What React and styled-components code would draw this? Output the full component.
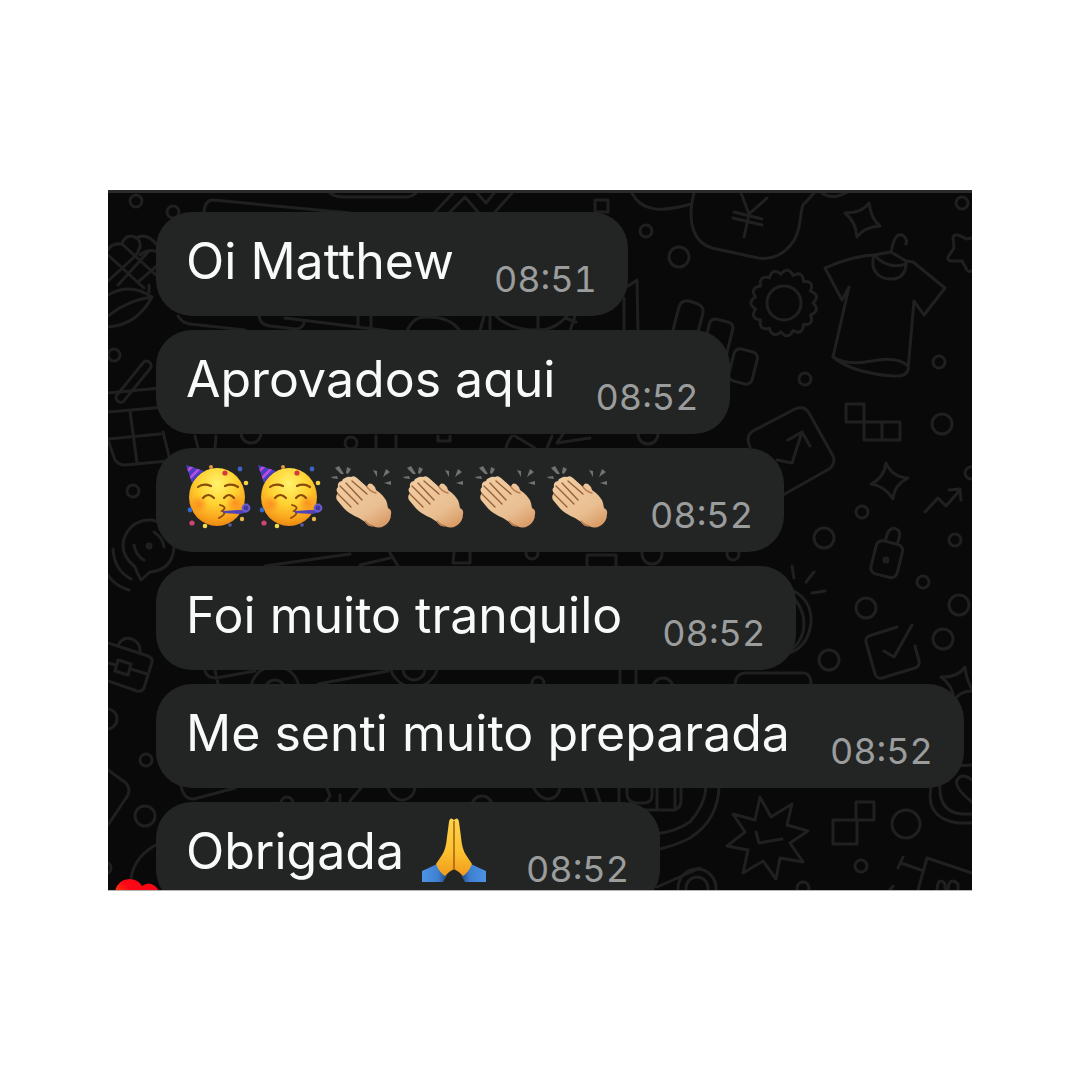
import React from 'react'
import styled, { createGlobalStyle } from 'styled-components'

const GlobalStyle = createGlobalStyle`
  * {
    box-sizing: border-box;
  }

  body {
    margin: 0;
    background: #ffffff;
    font-family: Inter, "Liberation Sans", sans-serif;
  }
`

const Page = styled.main`
  min-height: 100vh;
  display: flex;
  align-items: center;
  justify-content: center;
`

const Chat = styled.section`
  position: relative;
  display: grid;
  grid-template: 100% / 100%;
  width: 80%;
  aspect-ratio: 216 / 175;
  overflow: hidden;
  background: #090909;
  border-top: 3px solid #2a2c2c;
  box-shadow: 0 1px 0 #b4b4b4;
`

const Wallpaper = styled.svg`
  grid-area: 1 / 1;
  width: 100%;
  height: 100%;
  fill: none;
  stroke: #202020;
  stroke-width: 3;
  stroke-linecap: round;
  stroke-linejoin: round;
`

const Messages = styled.ul`
  grid-area: 1 / 1;
  z-index: 1;
  display: flex;
  flex-direction: column;
  align-items: flex-start;
  gap: 14px;
  margin: 0;
  padding: 19px 12px 0 48px;
  list-style: none;
`

const Bubble = styled.li`
  display: flex;
  flex-shrink: 0;
  align-items: flex-end;
  gap: 40px;
  min-height: 104px;
  padding: 17px 31px 15px 30px;
  border-radius: 36px;
  background: #232525;
`

const Body = styled.div`
  display: flex;
  align-self: flex-start;
  gap: ${(props) => (props.$emojiOnly ? '8px' : '18px')};
  color: #f8f9f9;
  font-size: 50px;
  line-height: 64px;
  white-space: nowrap;
`

const Time = styled.time`
  color: #9b9d9d;
  font-size: 36px;
  line-height: 44px;
  font-variant-numeric: tabular-nums;
`

const Emoji = styled.svg`
  flex-shrink: 0;
  width: 64px;
  height: 64px;
  overflow: visible;
`

const Heart = styled.svg`
  position: absolute;
  z-index: 2;
  left: 7px;
  bottom: -32px;
  width: 46px;
  height: 44px;
`

const smallDots = [
  [136, 201], [173, 212], [646, 231], [962, 203], [805, 379], [939, 362],
  [862, 512], [955, 540], [923, 582], [971, 473], [733, 554], [114, 355],
  [133, 491], [146, 760], [105, 868], [861, 866], [803, 888], [351, 443],
  [532, 553], [538, 683], [287, 803],
]

const bigDots = [
  [679, 257], [942, 424], [824, 538], [959, 605], [943, 639], [866, 608],
  [829, 660], [145, 816], [107, 719], [648, 434], [652, 554], [251, 433],
  [663, 688], [482, 806],
]

const badgeEdge = () => {
  const points = []
  for (let i = 0; i < 180; i++) {
    const a = (i / 180) * Math.PI * 2
    const r = 29 + 4 * Math.abs(Math.sin(a * 7.5))
    points.push(`${(784 + r * Math.cos(a)).toFixed(1)},${(303 + r * Math.sin(a)).toFixed(1)}`)
  }
  return points.join(' ')
}

const doodles = [
  // money bag
  'M632 193C641 211 660 213 691 204M694 193C686 225 695 243 712 248L758 258C778 261 795 247 799 227C802 211 801 204 806 202L814 193M822 193Q832 200 846 193',
  'M741 193L749 214L767 198M749 214L744 237M734 212L762 219M733 218L762 225',
  // sparkles
  'M869 203Q871 219 880 226Q864 227 857 237Q856 222 845 213Q862 213 869 203Z',
  'M886 463Q892 477 908 478Q894 485 893 499Q885 486 871 484Q884 478 886 463Z',
  'M941 677Q957 678 965 667Q967 684 974 691Q961 690 954 700Q953 685 941 677Z',
  'M972 238L966 239Q955 232 953 237L954 248L948 257Q947 261 952 261L962 261L967 270Q969 273 973 270',
  // shirt on a hanger
  'M891 252L893 244Q896 233 902 235Q908 238 906 244M891 252L906 261L913 262L945 288L924 315L914 301L908 370Q906 377 893 376Q852 373 833 357L849 287L842 300L825 268Q852 256 874 255L891 252',
  'M833 357Q848 366 872 361Q897 356 908 366M874 255Q888 270 906 264M874 255C869 272 881 280 893 279Q907 277 906 261',
  // blocks
  'M846 404H864V422H846ZM864 422H882V440H864ZM882 422H900V440H882ZM856 802H874V820H856ZM833 820H857V844H833ZM595 200H608V212H595Z',
  // chart card
  'M750 447Q745 436 753 431L795 409Q804 405 809 413L833 456Q836 464 829 469L783 495M777 460L792 463L802 432M788 440L802 432L810 446',
  'M925 512L938 498L946 506L960 490M949 490L960 489L961 500',
  // padlock shackle
  'M885 541L888 532Q893 525 899 531Q901 535 897 544',
  // alarm
  'M792 590Q812 600 811 622Q809 645 790 653M794 598Q807 614 803 632Q800 644 790 650M792 566L794 578M806 582L814 572M812 593L825 591',
  // check box
  'M897 627L869 636Q865 638 866 642L875 674Q877 679 882 678L915 668Q920 666 919 661L915 646M884 651L894 657L912 625',
  'M735 684Q736 674 744 673H804Q811 674 811 684',
  // roll
  'M932 783Q923 818 958 823H972M940 783Q938 812 962 814H972M957 766L972 765M972 780Q962 772 957 780Q954 788 972 802',
  // burst
  'M760 797L771 817L792 804L787 825L808 831L790 843L803 862L780 858L776 879L763 861L743 873L748 850L727 846L745 832L733 814L755 820ZM756 832L759 843L782 839',
  // bottom right bag
  'M903 857L898 868M901 863L921 870M918 890L927 858L972 873M937 890Q938 876 945 884V890M948 890Q949 876 958 884V890M890 890L893 886',
  // broad arcs
  'M719 787Q718 820 690 838Q675 846 655 850M706 787Q705 805 690 822Q675 832 655 834M657 887L700 868',
  'M619 787V802M627 787V795Q628 802 636 803H645Q652 802 652 795V787M657 787V808M640 810H673Q681 809 681 801V787M675 787V810M582 787L587 802M595 787L600 802',
  // top edge
  'M204 212Q205 200 213 200L350 213M330 193Q335 197 345 197H405Q412 197 416 193M435 212L453 193M450 212L465 197L478 212M477 193L486 203L494 193M495 212L512 193',
  // pine cone
  'M108 250Q111 243 122 244Q124 236 132 236Q141 238 140 247Q138 254 132 259M136 238Q147 232 157 245M140 255Q148 248 158 252M122 244L156 275M108 255L144 288M132 259L108 281M148 252L118 285M158 265L138 282M149 285V292',
  'M108 295Q130 282 152 297Q137 325 108 327M152 297Q130 299 108 316',
  // basket
  'M108 393L160 388M108 412L165 407M108 439L160 434M108 440L115 460Q119 465 125 465L168 461M130 411L137 463M163 432L170 460',
  // location bubble
  'M135 567Q118 553 125 536Q133 519 152 520Q175 525 174 548Q172 570 150 572L141 580Q137 573 135 567M134 545Q136 556 144 560M113 549Q114 570 131 579M108 575Q115 586 129 590M154 532Q163 538 164 547',
  // suitcase
  'M108 643L148 656Q153 658 152 662L144 688Q142 692 137 691L108 681M118 646Q122 636 132 639Q141 643 140 652M108 663L116 665M131 669L147 674M118 660L131 664L128 675L115 671Z',
  'M108 770L126 783Q132 790 126 798L108 825M131 878Q135 855 158 844',
  // strips between the rows
  'M178 316Q182 323 190 324L245 330M259 316Q260 325 270 326L296 329Q303 328 304 323M285 318L390 331M358 316V326M371 316V328',
  'M407 331Q413 317 425 317Q450 316 460 331M480 331L484 316M490 331V316M496 316Q510 330 538 330Q555 330 567 316M538 316V331M570 331L575 316M565 318L576 322',
  'M624 298V332M628 286L637 280L638 332M673 330L679 307Q681 300 689 301L698 304Q704 307 703 313L698 332',
  'M195 436L198 448M216 436L215 448M376 436V448M396 436V448M438 436V441H450V436M506 448Q508 440 512 436M515 436L535 448M547 448L552 436M563 434L557 443L590 438',
  'M265 566L350 554M454 552L453 563H470V552M360 565L390 558M390 553L398 566M587 566V555H616V566',
  'M205 671Q207 678 216 678L255 671M215 670L218 684M318 684L388 671M620 670V684M636 670V684',
  'M181 786Q184 800 194 799L235 788M327 788L330 796L326 802M340 795V802M350 801L361 788M388 788Q390 796 400 800M402 800Q414 799 415 787M533 787Q540 800 550 799Q559 797 560 787',
]

function Doodles() {
  return (
    <Wallpaper viewBox="108 193 864 697" preserveAspectRatio="xMidYMid slice" aria-hidden="true">
      {smallDots.map(([x, y]) => <circle key={`${x}-${y}`} cx={x} cy={y} r="6" />)}
      {bigDots.map(([x, y]) => <circle key={`${x}-${y}`} cx={x} cy={y} r="10" />)}
      {doodles.map((d) => <path key={d} d={d} />)}
      <polygon points={badgeEdge()} />
      <circle cx="784" cy="303" r="17" />
      <circle cx="906" cy="824" r="14" />
      <circle cx="697" cy="888" r="19" />
      <circle cx="697" cy="888" r="11" />
      <circle cx="275" cy="690" r="24" />
      <circle cx="275" cy="690" r="10" />
      <circle cx="414" cy="663" r="24" />
      <circle cx="414" cy="669" r="11" />
      <circle cx="149" cy="546" r="2" />
      <circle cx="886" cy="560" r="2" />
      <rect x="873" y="542" width="27" height="34" rx="6" transform="rotate(14 886 560)" />
      <rect x="731" y="350" width="24" height="33" rx="6" transform="rotate(14 743 367)" />
      <rect x="705" y="320" width="24" height="48" rx="6" transform="rotate(14 717 343)" />
      <rect x="129" y="357" width="9" height="50" rx="4" transform="rotate(39 134 382)" />
    </Wallpaper>
  )
}

function PartyFace() {
  return (
    <Emoji viewBox="0 0 64 64" role="img" aria-label="🥳">
      <defs>
        <radialGradient id="face" cx="50%" cy="28%" r="72%">
          <stop offset="0" stopColor="#fff36b" />
          <stop offset="0.5" stopColor="#ffd02f" />
          <stop offset="0.85" stopColor="#f9a01b" />
          <stop offset="1" stopColor="#e98a12" />
        </radialGradient>
        <radialGradient id="cheek">
          <stop offset="0" stopColor="#fb7a1e" stopOpacity="0.65" />
          <stop offset="1" stopColor="#fb7a1e" stopOpacity="0" />
        </radialGradient>
        <clipPath id="hat">
          <path d="M0 0L18 6Q12 10 6 18Z" />
        </clipPath>
      </defs>
      <ellipse cx="31" cy="32" rx="28" ry="29" fill="url(#face)" />
      <circle cx="13" cy="39" r="9" fill="url(#cheek)" />
      <circle cx="49" cy="38" r="9" fill="url(#cheek)" />
      <g clipPath="url(#hat)">
        <path d="M0 0H20V20H0Z" fill="#4a3fc0" />
        <path d="M0 7L8 0M3 14L15 2M6 20L20 6" stroke="#b94be0" strokeWidth="2.6" />
      </g>
      <g fill="none" stroke="#8a4a08" strokeWidth="2.2" strokeLinecap="round">
        <path d="M12 22Q17 18 25 21M39 21Q46 18 52 22" />
        <path d="M17 33Q22 27 28 33M38 33Q43 27 48 33" />
        <path d="M34 40Q42 42 36 46Q42 48 33 53" strokeWidth="1.8" />
      </g>
      <path d="M37 46L52 45L60 45L62 47L54 49L37 48Z" fill="#5144b8" />
      <circle cx="60" cy="43" r="3.4" fill="#4238a0" stroke="#6a5ccc" strokeWidth="2" />
      <circle cx="25" cy="2" r="2" fill="#e29a42" />
      <circle cx="39" cy="8" r="2.6" fill="#d9373f" />
      <circle cx="54" cy="4" r="2.4" fill="#3f62c6" />
      <circle cx="60" cy="18" r="2.3" fill="#f4d24c" />
      <circle cx="4" cy="45" r="2.4" fill="#3567d0" />
      <circle cx="6" cy="58" r="2.6" fill="#cf4472" />
      <circle cx="19" cy="61" r="2.3" fill="#f2dc4a" />
      <circle cx="56" cy="54" r="2.2" fill="#e9b54a" />
      <circle cx="44" cy="60" r="1.8" fill="#5a5ba8" />
    </Emoji>
  )
}

function Clap() {
  return (
    <Emoji viewBox="0 0 64 64" role="img" aria-label="👏🏼">
      <defs>
        <linearGradient id="skin" x1="0.2" y1="0.1" x2="0.8" y2="1">
          <stop offset="0" stopColor="#f0cba0" />
          <stop offset="0.65" stopColor="#e9bf92" />
          <stop offset="1" stopColor="#d99b66" />
        </linearGradient>
      </defs>
      <path
        d="M15 13Q18 11 21 12Q24 10 27 13L37 22Q38 17 42 19Q45 21 46 25Q55 31 57 38L58 43Q62 45 61 49Q61 57 54 61Q49 64 43 61Q38 62 35 57L29 53Q17 48 12 41L7 35Q5 31 8 28Q5 25 8 22Q7 17 12 16Q12 14 15 13Z"
        fill="url(#skin)"
      />
      <g fill="none" stroke="#9a6038" strokeWidth="1.4" strokeLinecap="round">
        <path d="M22 16L37 29M16 18L32 35M10 21L28 39M8 29L21 42" />
        <path d="M37 22Q41 27 46 28" stroke="#b97d4d" />
        <path d="M35 56Q38 60 43 61" stroke="#b97d4d" />
      </g>
      <path
        fill="#717373"
        d="M5 3L9 1L14 9L11 9ZM17 2L21 4L18 9L16 8ZM1 12L7 11L8 14L2 13ZM43 5L47 6L47 12ZM56 4L60 7L53 12ZM54 18L61 16V20Z"
      />
    </Emoji>
  )
}

function FoldedHands() {
  return (
    <Emoji viewBox="0 0 64 64" role="img" aria-label="🙏">
      <defs>
        <linearGradient id="palm" x1="0" y1="0" x2="0" y2="1">
          <stop offset="0" stopColor="#ffd34d" />
          <stop offset="0.6" stopColor="#fcc02f" />
          <stop offset="1" stopColor="#ef9a1c" />
        </linearGradient>
        <linearGradient id="sleeve" x1="0" y1="0" x2="1" y2="0">
          <stop offset="0" stopColor="#4d93e4" />
          <stop offset="0.65" stopColor="#3f7fd0" />
          <stop offset="1" stopColor="#1f477d" />
        </linearGradient>
      </defs>
      <g id="half">
        <path d="M0 52Q7 49 15 45Q18 52 25 56L21 63H0Z" fill="url(#sleeve)" />
        <path d="M32 1Q28 -3 27 3L25 18Q24 30 20 36L14 45Q17 53 23 57Q26 53 32 50Z" fill="url(#palm)" />
      </g>
      <use href="#half" transform="matrix(-1 0 0 1 64 0)" />
      <path d="M32 2V51" stroke="#a4600f" strokeWidth="1.5" />
    </Emoji>
  )
}

const messages = [
  { text: 'Oi Matthew', time: '08:51' },
  { text: 'Aprovados aqui', time: '08:52' },
  { emojis: [PartyFace, PartyFace, Clap, Clap, Clap, Clap], time: '08:52' },
  { text: 'Foi muito tranquilo', time: '08:52' },
  { text: 'Me senti muito preparada', time: '08:52' },
  { text: 'Obrigada', emojis: [FoldedHands], time: '08:52' },
]

function App() {
  return (
    <>
      <GlobalStyle />
      <Page>
        <Chat>
          <Doodles />
          <Messages>
            {messages.map((message, index) => (
              <Bubble key={index}>
                <Body $emojiOnly={!message.text}>
                  {message.text && <span>{message.text}</span>}
                  {message.emojis && message.emojis.map((Icon, i) => <Icon key={i} />)}
                </Body>
                <Time>{message.time}</Time>
              </Bubble>
            ))}
          </Messages>
          <Heart viewBox="0 0 46 44" aria-hidden="true">
            <defs>
              <linearGradient id="heart" x1="0" y1="0.5" x2="0.5" y2="0">
                <stop offset="0" stopColor="#ff5a00" />
                <stop offset="0.6" stopColor="#fb0716" />
              </linearGradient>
            </defs>
            <path d="M24 44Q0 28 0 14Q2 2 14 1Q23 1 27 8Q34 3 40 8Q46 13 45 21Q42 32 24 44Z" fill="url(#heart)" />
          </Heart>
        </Chat>
      </Page>
    </>
  )
}

export default App
